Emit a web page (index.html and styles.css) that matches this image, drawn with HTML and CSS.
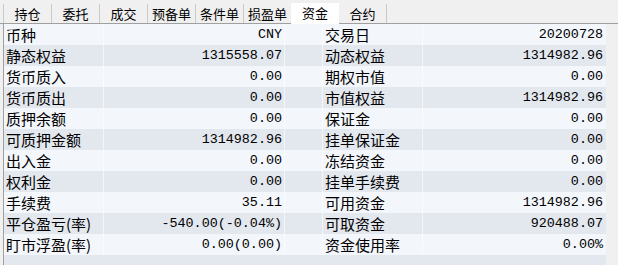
FILE: index.html
```html
<!DOCTYPE html>
<html lang="zh-CN">
<head>
    <meta charset="UTF-8">
    <title>资金</title>
    <link rel="stylesheet" href="styles.css">
</head>
<body>
    <div class="panel">
        <div class="tabs">
            <div class="tab">持仓</div>
            <div class="tab">委托</div>
            <div class="tab">成交</div>
            <div class="tab">预备单</div>
            <div class="tab">条件单</div>
            <div class="tab">损盈单</div>
            <div class="tab active">资金</div>
            <div class="tab">合约</div>
        </div>

        <div class="grid">
            <div class="row">
                <div class="label">币种</div><div class="val">CNY</div><div class="gap"></div>
                <div class="label">交易日</div><div class="val">20200728</div>
            </div>
            <div class="row">
                <div class="label">静态权益</div><div class="val">1315558.07</div><div class="gap"></div>
                <div class="label">动态权益</div><div class="val">1314982.96</div>
            </div>
            <div class="row">
                <div class="label">货币质入</div><div class="val">0.00</div><div class="gap"></div>
                <div class="label">期权市值</div><div class="val">0.00</div>
            </div>
            <div class="row">
                <div class="label">货币质出</div><div class="val">0.00</div><div class="gap"></div>
                <div class="label">市值权益</div><div class="val">1314982.96</div>
            </div>
            <div class="row">
                <div class="label">质押余额</div><div class="val">0.00</div><div class="gap"></div>
                <div class="label">保证金</div><div class="val">0.00</div>
            </div>
            <div class="row">
                <div class="label">可质押金额</div><div class="val">1314982.96</div><div class="gap"></div>
                <div class="label">挂单保证金</div><div class="val">0.00</div>
            </div>
            <div class="row">
                <div class="label">出入金</div><div class="val">0.00</div><div class="gap"></div>
                <div class="label">冻结资金</div><div class="val">0.00</div>
            </div>
            <div class="row">
                <div class="label">权利金</div><div class="val">0.00</div><div class="gap"></div>
                <div class="label">挂单手续费</div><div class="val">0.00</div>
            </div>
            <div class="row">
                <div class="label">手续费</div><div class="val">35.11</div><div class="gap"></div>
                <div class="label">可用资金</div><div class="val">1314982.96</div>
            </div>
            <div class="row">
                <div class="label">平仓盈亏(率)</div><div class="val">-540.00(-0.04%)</div><div class="gap"></div>
                <div class="label">可取资金</div><div class="val">920488.07</div>
            </div>
            <div class="row">
                <div class="label">盯市浮盈(率)</div><div class="val">0.00(0.00)</div><div class="gap"></div>
                <div class="label">资金使用率</div><div class="val">0.00%</div>
            </div>
            <div class="row"></div>
        </div>
    </div>
</body>
</html>
```

FILE: styles.css
```css
body {
    margin: 0;
    background: #f0f0f0;
    font-family: "Noto Sans CJK SC", sans-serif;
    overflow: hidden;
}
.panel {
    width: 618px;
    height: 265px;
    overflow: hidden;
}
.tabs {
    display: flex;
    height: 24px;
    padding-left: 3px;
    align-items: flex-end;
    border-bottom: 1px solid #a0a0a0;
    box-sizing: border-box;
    background: #f0f0f0;
}
.tab {
    width: 47px;
    height: 19px;
    border-left: 1px solid #c8c8c8;
    font-size: 13px;
    line-height: 19px;
    text-align: center;
    color: #000;
}
.tab.active {
    height: 21px;
    margin-bottom: -1px;
    background: #fff;
    border-left: none;
    width: 48px;
}
.tab.active + .tab {
    border-left: none;
}
.tab:last-child {
    border-right: 1px solid #c8c8c8;
}
.grid {
    margin-left: 3px;
    border-left: 1px solid #a0a0a0;
    background: #f0f0f0;
}
.row {
    display: flex;
    height: 21px;
    width: 602px;
    background: #f3f6fb;
    overflow: hidden;
}
.row:nth-child(even) {
    background: #e3e7ee;
}
.row > div {
    border-right: 1px solid rgba(255, 255, 255, 0.6);
    box-sizing: border-box;
    height: 21px;
    line-height: 21px;
    white-space: nowrap;
}
.label {
    font-size: 15px;
    padding-left: 2px;
    color: #000;
}
.row > .label:first-child {
    width: 100px;
}
.row > .label:nth-child(4) {
    width: 100px;
}
.val {
    font-family: "Liberation Mono", monospace;
    font-size: 13.4px;
    text-align: right;
    padding-right: 2px;
}
.row > .val:nth-child(2) {
    width: 181px;
}
.row > .val:nth-child(5) {
    width: 182px;
    border-right: none;
}
.gap {
    width: 38px;
}
```
